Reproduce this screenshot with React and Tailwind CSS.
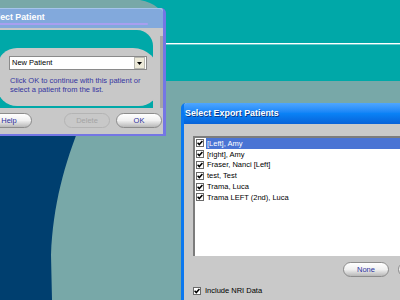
import React from "react";

const font = { fontFamily: '"Liberation Sans", Arial, sans-serif' };

const patients = [
  "[Left], Amy",
  "[right], Amy",
  "Fraser, Nanci [Left]",
  "test, Test",
  "Trama, Luca",
  "Trama LEFT (2nd), Luca",
];

const Check = () => (
  <span className="w-[8px] h-[8px] shrink-0 bg-white border border-[#6a6a6a] flex items-center justify-center">
    <svg width="6" height="6" viewBox="0 0 6 6">
      <path d="M0.6 2.8 L2.3 4.6 L5.4 0.9" fill="none" stroke="#000" strokeWidth="1.5" />
    </svg>
  </span>
);

const PillButton = ({ label, disabled, className = "" }) => (
  <div
    className={
      "h-[15px] w-[46px] shrink-0 rounded-full flex items-center justify-center text-[7.5px] " +
      (disabled
        ? "border border-[#b4b4b4] bg-[#c8c8c8] text-[#a4a4a4] "
        : "border border-[#8c8c8c] bg-gradient-to-b from-white via-[#f0f0f0] to-[#b8b8b8] text-[#2a2f9c] ") +
      className
    }
  >
    {label}
  </div>
);

const Backdrop = () => (
  <svg className="absolute inset-0" width="400" height="300" viewBox="0 0 400 300">
    <path d="M140 0 C155 3 163 10 165 20 L160 81 L400 81 L400 0 Z" fill="#00a8a8" />
    <rect x="166" y="43" width="234" height="1.4" fill="#ffffff" />
    <path d="M0 120 L82 120 C64 165 53 205 51 255 L52 300 L0 300 Z" fill="#003f6f" />
  </svg>
);

const SelectPatient = () => (
  <div className="absolute left-[-18px] top-[8px] w-[184px] h-[128px] flex flex-col bg-[#c8c8c8] border-r-[3px] border-b-[2px] border-[#7476e4] rounded-tr-[5px]">
    <div className="relative h-[20px] bg-[#82a9dc] border-t border-[#a6c4ec] rounded-tr-[4px] pl-[5px] flex items-center">
      <span className="text-white font-bold text-[8.8px] leading-none mt-[-2px]">Select Patient</span>
      <div className="absolute left-0 bottom-[3px] w-[166px] h-[2.5px] rounded-r-full bg-[#a89ff0]" />
    </div>
    <div className="mt-[2px] flex items-end">
      <div className="flex-1 h-[78px] bg-[#00a8a8] rounded-tr-[16px] flex flex-col justify-end">
        <div className="h-[58px] ml-[15px] mr-[-6px] mb-[2px] bg-[#c8c8c8] rounded-[20px] rounded-tr-[26px] pl-[12px] pt-[8px]">
          <div className="w-[138px] h-[14px] bg-white border border-[#8a8a8a] flex items-center">
            <span className="flex-1 pl-[2px] text-[7.5px] text-black">New Patient</span>
            <span className="w-[11px] h-[12px] mr-[1px] bg-[#ece9d8] border border-[#b8b8b0] flex items-center justify-center">
              <svg width="5" height="3" viewBox="0 0 5 3">
                <path d="M0 0 L5 0 L2.5 3 Z" fill="#000" />
              </svg>
            </span>
          </div>
          <div className="mt-[6px] pl-[1px] text-[7.5px] leading-[9px] text-[#3434a0]">
            <div>Click OK to continue with this patient or</div>
            <div>select a patient from the list.</div>
          </div>
        </div>
      </div>
      <div className="w-[7px]" />
      <div className="w-[3px] h-[72px] bg-[#a6a6a6]" />
    </div>
    <div className="flex items-center pt-[5px] pl-[4px]">
      <PillButton label="Help" />
      <PillButton label="Delete" disabled className="ml-[32px]" />
      <PillButton label="OK" className="ml-[6px]" />
    </div>
  </div>
);

const ExportPatients = () => (
  <div className="absolute left-[181px] top-[103px] w-[240px] h-[210px] flex flex-col bg-[#c9c9c9] border-l-[3px] border-[#0a78f0] rounded-tl-[5px]">
    <div className="h-[21px] bg-gradient-to-b from-[#4ea6ff] via-[#0a82f6] to-[#0862d8] flex items-center pl-[1px] rounded-tl-[3px]">
      <span className="text-white font-bold text-[8.9px] leading-none [text-shadow:1px_1px_0_#0a3a8a]">
        Select Export Patients
      </span>
    </div>
    <div className="flex-1 flex flex-col">
      <div className="mt-[12px] ml-[9px] h-[120px] bg-white border-t-2 border-l-2 border-[#7c7c7c] pl-[1px]">
        {patients.map((p, i) => (
          <div key={p} className="h-[10.8px] flex items-center gap-[2px]">
            <Check />
            <span
              className={
                "flex-1 h-full flex items-center pl-[1px] text-[7.5px] " +
                (i === 0 ? "bg-[#4a74d4] text-white" : "text-black")
              }
            >
              {p}
            </span>
          </div>
        ))}
      </div>
      <div className="flex gap-[9px] pl-[159px] mt-[6px]">
        <PillButton label="None" />
        <PillButton label="All" />
      </div>
      <div className="flex items-center gap-[4px] ml-[9px] mt-[8px]">
        <Check />
        <span className="text-[7.5px] text-black">Include NRI Data</span>
      </div>
    </div>
  </div>
);

export default function App() {
  return (
    <div className="relative w-[400px] h-[300px] overflow-hidden bg-[#78a8a8]" style={font}>
      <Backdrop />
      <SelectPatient />
      <ExportPatients />
    </div>
  );
}
